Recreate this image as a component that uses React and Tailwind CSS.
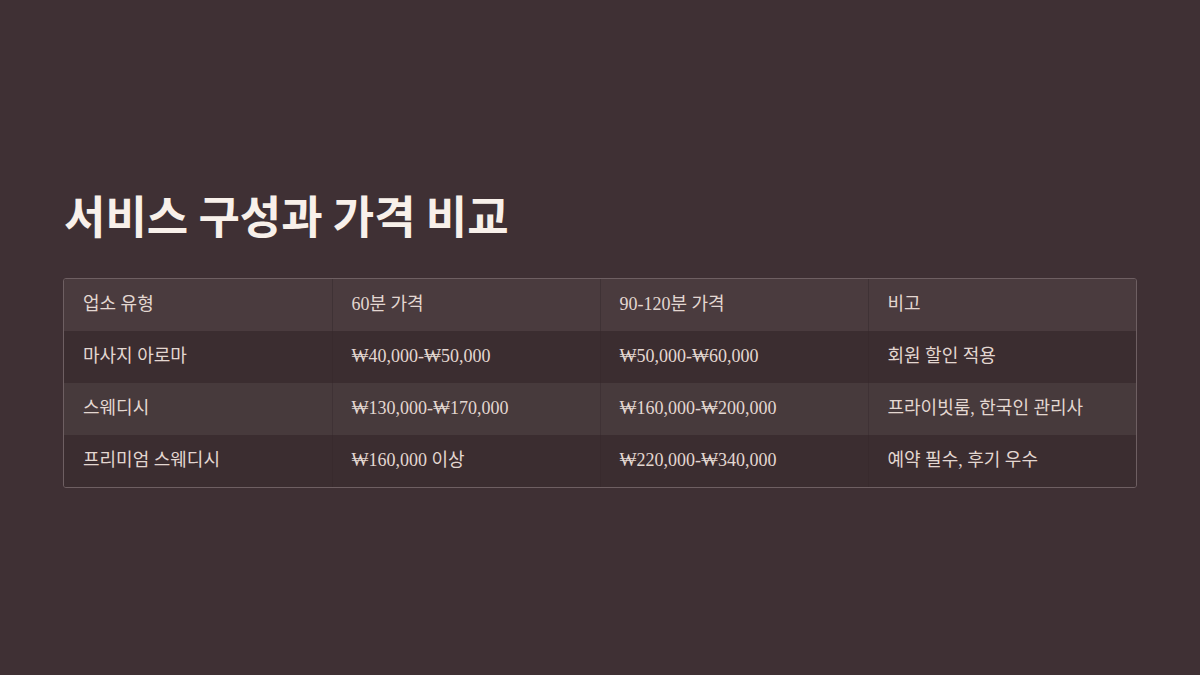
const rows = [
  ['마사지 아로마', '₩40,000-₩50,000', '₩50,000-₩60,000', '회원 할인 적용'],
  ['스웨디시', '₩130,000-₩170,000', '₩160,000-₩200,000', '프라이빗룸, 한국인 관리사'],
  ['프리미엄 스웨디시', '₩160,000 이상', '₩220,000-₩340,000', '예약 필수, 후기 우수'],
];

const head = ['업소 유형', '60분 가격', '90-120분 가격', '비고'];

export default function App() {
  return (
    <div className="h-screen w-full bg-[#3f3034] flex flex-col justify-center px-[63px]">
      <h1 className="text-[45px] leading-[54px] font-bold text-[#f8f0ea] font-['Noto_Sans_CJK_KR',sans-serif] mb-[36px] pl-[1px]">
        서비스 구성과 가격 비교
      </h1>
      <div className="border border-[#6e5f62] rounded-[3px] overflow-hidden">
        <table className="w-full table-fixed border-collapse font-['Liberation_Serif','Noto_Sans_CJK_KR',serif] text-[18px] text-[#e3d7d1]">
          <thead>
            <tr className="bg-[#4a3b3e] h-[52px]">
              {head.map((h, i) => (
                <th
                  key={h}
                  className={`text-left font-normal px-[19px] ${i < 3 ? 'border-r border-[#3f3235]' : ''}`}
                >
                  {h}
                </th>
              ))}
            </tr>
          </thead>
          <tbody>
            {rows.map((r, ri) => (
              <tr key={ri} className={`h-[52px] ${ri % 2 === 0 ? 'bg-[#3b2d30]' : 'bg-[#473a3c]'}`}>
                {r.map((c, i) => (
                  <td
                    key={i}
                    className={`px-[19px] ${i < 3 ? (ri % 2 === 0 ? 'border-r border-[#382a2d]' : 'border-r border-[#3f3235]') : ''}`}
                  >
                    {c}
                  </td>
                ))}
              </tr>
            ))}
          </tbody>
        </table>
      </div>
    </div>
  );
}
